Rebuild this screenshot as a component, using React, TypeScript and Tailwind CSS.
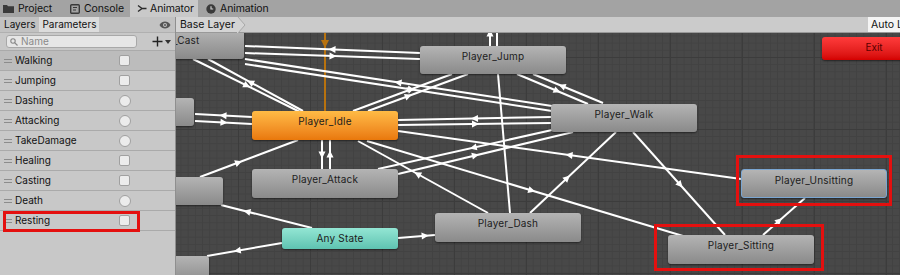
import React from "react";

type Pt = [number, number];

interface EdgeDef {
  from: Pt;
  to: Pt;
  t?: number;
  arrow?: boolean;
}

// canvas origin in page coords is (176, 32); edges use page coords via viewBox
const edges: EdgeDef[] = [
  { from: [420, 52], to: [245, 45] },
  { from: [245, 52], to: [420, 58] },
  { from: [552, 105], to: [245, 58] },
  { from: [245, 63], to: [552, 110], t: 0.54 },
  { from: [193, 58], to: [300, 111] },
  { from: [303, 110], to: [208, 58], t: 0.55 },
  { from: [353, 110], to: [452, 73], t: 0.58 },
  { from: [368, 110], to: [468, 73], t: 0.4 },
  { from: [490, 46], to: [490, 30], t: 0.85 },
  { from: [497, 46], to: [497, 30], arrow: false },
  { from: [517, 73], to: [588, 103], t: 0.56 },
  { from: [603, 102], to: [533, 73], t: 0.58 },
  { from: [498, 73], to: [510, 212], arrow: false },
  { from: [252, 116], to: [195, 113] },
  { from: [195, 120], to: [252, 123] },
  { from: [552, 116], to: [398, 119] },
  { from: [398, 124], to: [552, 122] },
  { from: [322, 139], to: [322, 168] },
  { from: [330, 168], to: [330, 139] },
  { from: [741, 178], to: [398, 130] },
  { from: [488, 212], to: [358, 140], t: 0.54 },
  { from: [367, 140], to: [683, 235], t: 0.52 },
  { from: [200, 176], to: [298, 139], t: 0.39 },
  { from: [552, 129], to: [378, 168], t: 0.45 },
  { from: [398, 173], to: [573, 131], t: 0.44 },
  { from: [530, 212], to: [616, 131], t: 0.43 },
  { from: [633, 131], to: [725, 234], t: 0.51 },
  { from: [763, 234], to: [805, 197], t: 0.38 },
  { from: [312, 227], to: [221, 204], t: 0.71 },
  { from: [282, 242], to: [207, 255], t: 0.59 },
  { from: [398, 237], to: [435, 234], t: 0.72 },
];

function Edge({ from, to, t = 0.5, arrow = true }: EdgeDef) {
  const dx = to[0] - from[0];
  const dy = to[1] - from[1];
  const len = Math.hypot(dx, dy);
  const ux = dx / len;
  const uy = dy / len;
  const px = from[0] + dx * t;
  const py = from[1] + dy * t;
  const tip = `${px + ux * 4},${py + uy * 4}`;
  const b1 = `${px - ux * 3 - uy * 3.5},${py - uy * 3 + ux * 3.5}`;
  const b2 = `${px - ux * 3 + uy * 3.5},${py - uy * 3 - ux * 3.5}`;
  return (
    <g>
      <line
        x1={from[0]}
        y1={from[1]}
        x2={to[0]}
        y2={to[1]}
        stroke="#ffffff"
        strokeWidth={2}
      />
      {arrow ? <polygon points={`${tip} ${b1} ${b2}`} fill="#ffffff" /> : null}
    </g>
  );
}

const grayNode =
  "bg-gradient-to-b from-[#b4b4b4] to-[#8a8a8a] shadow-[0_1px_2px_rgba(0,0,0,0.5)]";

const nodes: { label: string; className: string }[] = [
  { label: "Player_Cast", className: `left-[-78px] top-[-3px] h-[29px] w-[146px] ${grayNode}` },
  { label: "", className: `left-[-128px] top-[65px] h-[28px] w-[146px] ${grayNode}` },
  { label: "", className: `left-[-99px] top-[144px] h-[28px] w-[146px] ${grayNode}` },
  { label: "", className: `left-[-113px] top-[223px] h-[28px] w-[146px] ${grayNode}` },
  { label: "Player_Jump", className: `left-[244px] top-[13px] h-[28px] w-[146px] ${grayNode}` },
  { label: "Player_Walk", className: `left-[375px] top-[71px] h-[28px] w-[146px] ${grayNode}` },
  {
    label: "Player_Idle",
    className:
      "left-[76px] top-[78px] h-[29px] w-[146px] bg-gradient-to-b from-[#ffbb45] to-[#e9780a] shadow-[0_1px_2px_rgba(0,0,0,0.5)]",
  },
  { label: "Player_Attack", className: `left-[76px] top-[136px] h-[29px] w-[146px] ${grayNode}` },
  { label: "Player_Dash", className: `left-[259px] top-[180px] h-[29px] w-[146px] ${grayNode}` },
  {
    label: "Any State",
    className:
      "left-[106px] top-[195px] h-[21px] w-[116px] bg-gradient-to-b from-[#93e6d4] to-[#5ec3b1] shadow-[0_1px_2px_rgba(0,0,0,0.5)]",
  },
  {
    label: "Player_Unsitting",
    className: `left-[565px] top-[136px] h-[29px] w-[146px] border border-[#7aa6d2] ${grayNode}`,
  },
  { label: "Player_Sitting", className: `left-[492px] top-[202px] h-[29px] w-[146px] ${grayNode}` },
];

const params: { name: string; kind: "bool" | "trigger" }[] = [
  { name: "Walking", kind: "bool" },
  { name: "Jumping", kind: "bool" },
  { name: "Dashing", kind: "trigger" },
  { name: "Attacking", kind: "trigger" },
  { name: "TakeDamage", kind: "trigger" },
  { name: "Healing", kind: "bool" },
  { name: "Casting", kind: "bool" },
  { name: "Death", kind: "trigger" },
  { name: "Resting", kind: "bool" },
];

function TabBar() {
  return (
    <div className="flex h-[17px] shrink-0 items-stretch bg-[#a3a3a3] text-[10.5px] tracking-[-0.1px] text-[#111]">
      <div className="flex w-[66px] items-center gap-[4px] pl-[3px]">
        <svg width="11" height="9" viewBox="0 0 11 9">
          <path d="M0 1h4l1 1.2h6V9H0z" fill="#3a3a3a" />
        </svg>
        Project
      </div>
      <div className="flex w-[64px] items-center gap-[4px] pl-[4px]">
        <svg width="10" height="10" viewBox="0 0 10 10">
          <rect x="0.7" y="0.7" width="8.6" height="8.6" rx="1" fill="none" stroke="#3a3a3a" strokeWidth="1.4" />
          <path d="M3 3.5h4M3 6h3" stroke="#3a3a3a" strokeWidth="1.2" />
        </svg>
        Console
      </div>
      <div className="flex w-[68px] items-center gap-[3px] bg-[#c9c9c9] pl-[7px]">
        <svg width="10" height="9" viewBox="0 0 10 9">
          <path d="M1 1.5l4 3-4 3M5 4.5h4.5" fill="none" stroke="#2a2a2a" strokeWidth="1.4" />
        </svg>
        Animator
      </div>
      <div className="flex items-center gap-[4px] pl-[8px]">
        <svg width="10" height="10" viewBox="0 0 10 10">
          <circle cx="5" cy="5" r="4.7" fill="#3a3a3a" />
          <path d="M5 2.2V5h2.2" fill="none" stroke="#d0d0d0" strokeWidth="1.2" />
        </svg>
        Animation
      </div>
    </div>
  );
}

function ParamRow({ name, kind, index }: { name: string; kind: "bool" | "trigger"; index: number }) {
  return (
    <div
      className={`flex h-[20px] shrink-0 items-center border-b border-[#aaaaaa] ${
        index === 0 ? "bg-[#bcbcbc]" : "bg-[#c8c8c8]"
      }`}
    >
      <div className="ml-[4px] flex w-[8px] flex-col gap-[2px]">
        <div className="h-px bg-[#8c8c8c]" />
        <div className="h-px bg-[#8c8c8c]" />
      </div>
      <span className="ml-[3px] w-[104px] text-[10px] text-[#111]">{name}</span>
      {kind === "bool" ? (
        <div className="h-[11px] w-[11px] rounded-[2px] border border-[#a0a0a0] bg-[#ececec]" />
      ) : (
        <div className="h-[12px] w-[12px] rounded-full border border-[#a0a0a0] bg-[#ececec]" />
      )}
    </div>
  );
}

function ParamsPanel() {
  return (
    <div className="flex w-[176px] shrink-0 flex-col border-r border-[#8f8f8f] bg-[#c8c8c8]">
      <div className="flex h-[16px] shrink-0 items-center border-b border-[#b0b0b0] bg-[#c2c2c2] text-[10px] text-[#111]">
        <div className="px-[4px]">Layers</div>
        <div className="flex h-full items-center bg-[#dcdcdc] px-[3px]">Parameters</div>
        <svg className="ml-auto mr-[4px]" width="12" height="8" viewBox="0 0 12 8">
          <path d="M0.5 4C2 1.3 4 0.5 6 0.5S10 1.3 11.5 4C10 6.7 8 7.5 6 7.5S2 6.7 0.5 4z" fill="#555" />
          <circle cx="6" cy="4" r="2" fill="#c2c2c2" />
          <circle cx="6" cy="4" r="1" fill="#555" />
        </svg>
      </div>
      <div className="flex h-[18px] shrink-0 items-center border-b border-[#aaaaaa]">
        <div className="ml-[6px] flex h-[13px] w-[131px] items-center gap-[3px] rounded-[3px] border border-[#a8a8a8] bg-[#e6e6e6] px-[3px] text-[10px] text-[#8a8a8a]">
          <svg width="8" height="8" viewBox="0 0 8 8">
            <circle cx="3" cy="3" r="2.2" fill="none" stroke="#888" strokeWidth="1.1" />
            <path d="M4.6 4.6L7.5 7.5" stroke="#888" strokeWidth="1.2" />
          </svg>
          Name
        </div>
        <svg className="ml-[15px]" width="11" height="11" viewBox="0 0 11 11">
          <path d="M5.5 0.5v10M0.5 5.5h10" stroke="#222" strokeWidth="1.4" />
        </svg>
        <svg className="ml-[2px]" width="6" height="4" viewBox="0 0 6 4">
          <path d="M0 0h6L3 4z" fill="#333" />
        </svg>
      </div>
      <div className="relative flex flex-col">
        {params.map((p, i) => (
          <ParamRow key={p.name} name={p.name} kind={p.kind} index={i} />
        ))}
        <div className="absolute left-[3px] top-[160px] h-[21px] w-[137px] border-[3px] border-[#e4100f]" />
      </div>
    </div>
  );
}

function Canvas() {
  return (
    <div className="relative flex-1 overflow-hidden bg-[#484848] bg-[linear-gradient(#3c3c3c_1px,transparent_1px),linear-gradient(90deg,#3c3c3c_1px,transparent_1px),linear-gradient(#424242_1px,transparent_1px),linear-gradient(90deg,#424242_1px,transparent_1px)] [background-size:72px_72px,72px_72px,7.2px_7.2px,7.2px_7.2px] [background-position:62px_24px,62px_24px,62px_24px,62px_24px]">
      <svg className="absolute left-0 top-0" width="724" height="243" viewBox="176 32 724 243">
        <line x1="325" y1="30" x2="325" y2="110" stroke="#b8720e" strokeWidth="2" />
        <polygon points="325,47 321,39 329,39" fill="#b8720e" />
        {edges.map((e, i) => (
          <Edge key={i} {...e} />
        ))}
      </svg>
      {nodes.map((n, i) => (
        <div
          key={i}
          className={`absolute whitespace-nowrap rounded-[3px] pt-[4px] text-center text-[10px] leading-[13px] tracking-[0.2px] text-[#1c1c1c] ${n.className}`}
        >
          {n.label}
        </div>
      ))}
      <div className="absolute left-[646px] top-[4px] h-[23px] w-[100px] rounded-[3px] bg-gradient-to-b from-[#ff3b3b] to-[#d40000] pt-[4px] pl-[4px] text-center text-[10px] leading-[13px] text-[#5a0000] shadow-[0_1px_2px_rgba(0,0,0,0.5)]">
        Exit
      </div>
      <div className="absolute left-[560px] top-[122px] h-[51px] w-[156px] border-[3px] border-[#e4100f]" />
      <div className="absolute left-[478px] top-[191px] h-[47px] w-[170px] border-[3px] border-[#e4100f]" />
    </div>
  );
}

export default function App() {
  return (
    <div className="flex h-[275px] w-[900px] flex-col overflow-hidden bg-[#c8c8c8] font-['Inter',sans-serif]">
      <TabBar />
      <div className="flex min-h-0 flex-1">
        <ParamsPanel />
        <div className="flex min-w-0 flex-1 flex-col">
          <div className="flex h-[16px] shrink-0 items-stretch border-b border-[#999] bg-[#cbcbcb] text-[10.5px] text-[#111]">
            <div className="flex items-center gap-[3px] bg-[#d4d4d4] pl-[4px] pr-[2px]">
              Base Layer
            </div>
            <svg width="9" height="16" viewBox="0 0 9 16">
              <path d="M0 0h1l7 8-7 8H0z" fill="#d4d4d4" />
              <path d="M1 0l7 8-7 8" fill="none" stroke="#a8a8a8" strokeWidth="1" />
            </svg>
            <div className="ml-auto flex w-[32px] items-center overflow-hidden whitespace-nowrap bg-[#f4f4f4] pl-[3px]">
              Auto Live Link
            </div>
          </div>
          <Canvas />
        </div>
      </div>
    </div>
  );
}
